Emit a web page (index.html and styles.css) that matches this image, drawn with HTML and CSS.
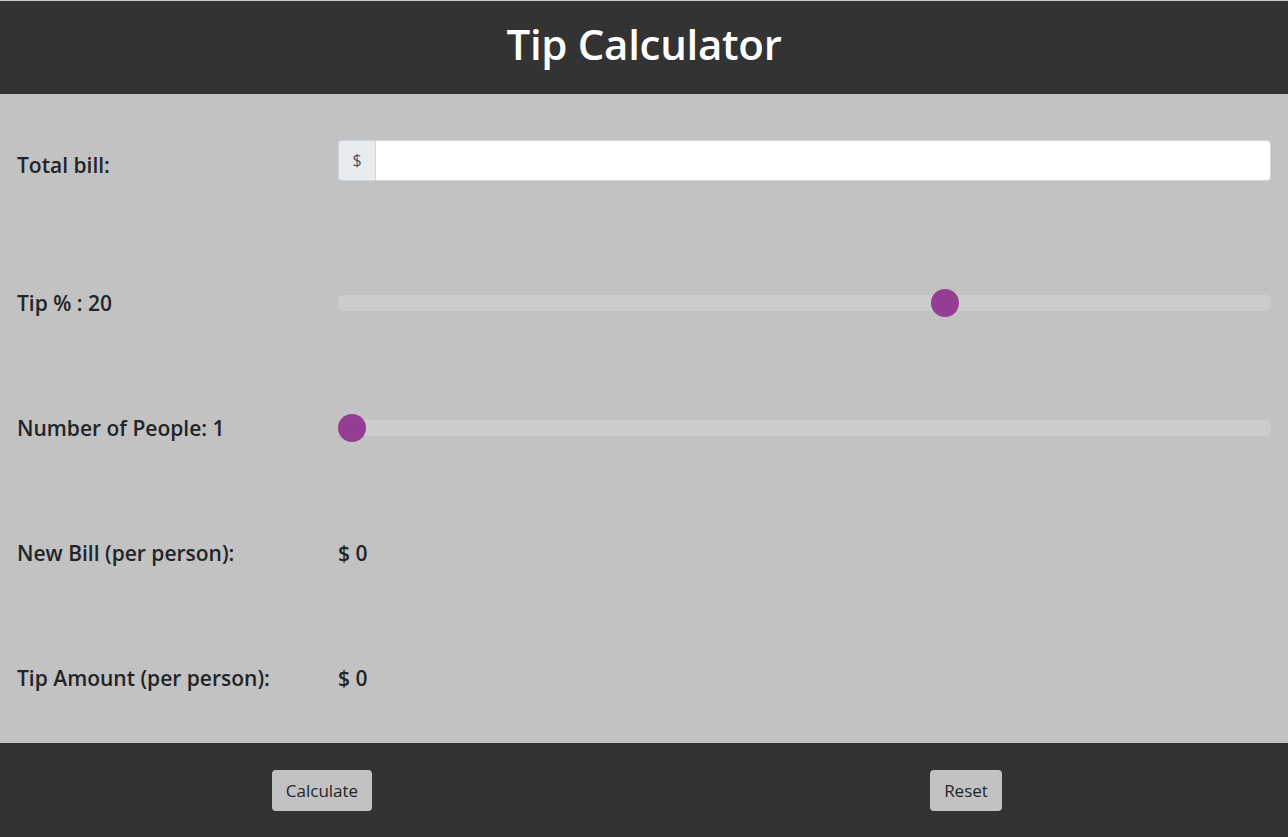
FILE: index.html
```html
<!DOCTYPE html>
<html lang="en">
<head>
<meta charset="utf-8">
<title>Tip Calculator</title>
<link rel="stylesheet" href="styles.css">
</head>
<body>
<header class="topbar">
  <h1 class="title">Tip Calculator</h1>
</header>
<main class="calc">
  <div class="row row-first">
    <label class="label" for="bill">Total bill:</label>
    <div class="control">
      <div class="input-group">
        <span class="addon">$</span>
        <input class="field" id="bill" type="text">
      </div>
    </div>
  </div>
  <div class="row">
    <div class="label">Tip % : 20</div>
    <div class="control">
      <input class="slider" type="range" min="1" max="30" value="20">
    </div>
  </div>
  <div class="row">
    <div class="label">Number of People: 1</div>
    <div class="control">
      <input class="slider" type="range" min="1" max="20" value="1">
    </div>
  </div>
  <div class="row">
    <div class="label">New Bill (per person):</div>
    <div class="control value">$ 0</div>
  </div>
  <div class="row">
    <div class="label">Tip Amount (per person):</div>
    <div class="control value">$ 0</div>
  </div>
</main>
<footer class="bottombar">
  <div class="cell"><button class="btn" type="button">Calculate</button></div>
  <div class="cell"><button class="btn" type="button">Reset</button></div>
</footer>
</body>
</html>
```

FILE: styles.css
```css
* { box-sizing: border-box; }
html, body { margin: 0; padding: 0; }
body {
  background: #c2c2c2;
  color: #212529;
  font-family: "Open Sans", "Noto Sans", sans-serif;
  height: 837px;
  display: flex;
  flex-direction: column;
}
.topbar {
  background: #333333;
  height: 94px;
  border-top: 1px solid #c8c8c8;
  display: flex;
  align-items: center;
  justify-content: center;
  padding-bottom: 6px;
}
.title {
  margin: 0;
  color: #ffffff;
  font-size: 42px;
  line-height: 1.2;
  font-weight: 600;
  letter-spacing: -0.3px;
}
.calc {
  flex: 1;
  display: flex;
  flex-direction: column;
}
.row {
  display: grid;
  grid-template-columns: 25% 75%;
  align-items: center;
  height: 125px;
}
.row-first {
  height: 146px;
  padding-bottom: 4px;
}
.label { padding: 0 16px 0 17px; }
.control { padding: 0 17px 0 16px; }
.label {
  font-size: 21px;
  font-weight: 600;
}
.value {
  font-size: 21px;
  font-weight: 600;
}
.input-group {
  display: flex;
  height: 41px;
  margin-bottom: 10px;
}
.addon {
  width: 37px;
  background: #e9ecef;
  border: 1px solid #ced4da;
  border-right: none;
  border-radius: 4px 0 0 4px;
  display: flex;
  align-items: center;
  justify-content: center;
  font-size: 16px;
  color: #495057;
}
.field {
  flex: 1;
  border: 1px solid #ced4da;
  border-radius: 0 4px 4px 0;
  background: #ffffff;
  font: inherit;
  outline: none;
}
.slider {
  -webkit-appearance: none;
  appearance: none;
  display: block;
  width: 100%;
  height: 16px;
  margin: 1px 0 0;
  background: #cccccc;
  border-radius: 5px;
  outline: none;
}
.slider::-webkit-slider-thumb {
  -webkit-appearance: none;
  appearance: none;
  width: 28px;
  height: 28px;
  border-radius: 50%;
  background: #953d93;
  border: none;
  cursor: pointer;
}
.bottombar {
  background: #333333;
  height: 94px;
  display: grid;
  grid-template-columns: 1fr 1fr;
  align-items: center;
}
.cell {
  display: flex;
  justify-content: center;
}
.btn {
  background: #c2c2c2;
  color: #212529;
  border: none;
  border-radius: 4px;
  height: 41px;
  padding: 0 14px;
  font-family: inherit;
  font-size: 17px;
  cursor: pointer;
}
```
